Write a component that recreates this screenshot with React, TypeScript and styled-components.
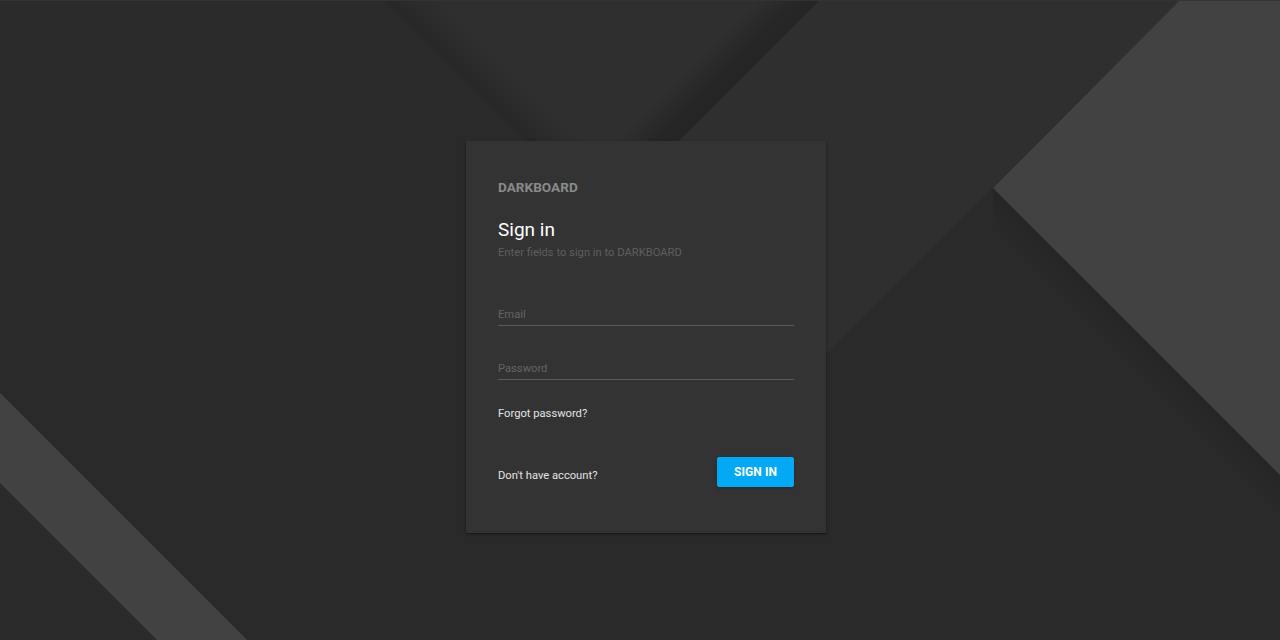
import React from "react";
import styled, { createGlobalStyle } from "styled-components";

const GlobalStyle = createGlobalStyle`
  html, body {
    margin: 0;
    padding: 0;
    background: #2a2a2a;
  }
  body {
    font-family: Roboto, "Noto Sans", "Liberation Sans", sans-serif;
    -webkit-font-smoothing: antialiased;
  }
  * { box-sizing: border-box; }
`;

const Page = styled.div`
  position: relative;
  width: 100%;
  height: 640px;
  overflow: hidden;
  display: flex;
  align-items: flex-start;
  justify-content: center;
  padding: 141px 0 0 12px;
  background: #2a2a2a;
`;

const Backdrop = styled.svg`
  position: absolute;
  left: 0;
  top: 0;
  width: 1280px;
  height: 640px;
  z-index: 0;
`;

const Card = styled.form`
  position: relative;
  z-index: 1;
  width: 360px;
  display: flex;
  flex-direction: column;
  padding: 38px 32px 46px;
  background: #333333;
  box-shadow: 0 1px 3px rgba(0, 0, 0, 0.35), 0 1px 1px rgba(0, 0, 0, 0.2);
`;

const Brand = styled.div`
  font-size: 13.6px;
  line-height: 16px;
  font-weight: 700;
  color: #8a8a8a;
`;

const Title = styled.h1`
  margin: 23px 0 0;
  font-size: 19px;
  line-height: 24px;
  font-weight: 400;
  color: #ffffff;
`;

const Subtitle = styled.p`
  margin: 4px 0 0;
  font-size: 11.2px;
  line-height: 14px;
  color: #5f5f5f;
`;

const Field = styled.label<{ $gap: number }>`
  display: block;
  margin-top: ${(p) => p.$gap}px;
  padding-bottom: 3px;
  border-bottom: 1px solid #5a5a5a;
`;

const Input = styled.input`
  display: block;
  width: 100%;
  height: 14px;
  padding: 0;
  border: none;
  outline: none;
  background: transparent;
  font-family: inherit;
  font-size: 11.2px;
  line-height: 14px;
  color: #e0e0e0;
  &::placeholder {
    color: #646464;
  }
`;

const TextLink = styled.a`
  font-size: 11.2px;
  line-height: 14px;
  color: #e4e4e4;
  text-decoration: none;
  cursor: pointer;
`;

const ForgotRow = styled.div`
  margin-top: 27px;
  display: flex;
`;

const ActionRow = styled.div`
  margin-top: 36px;
  display: flex;
  align-items: center;
  justify-content: space-between;
`;

const SignupLink = styled(TextLink)`
  margin-top: 8px;
`;

const Button = styled.button`
  width: 77px;
  height: 30px;
  padding: 0 0 1px;
  border: none;
  border-radius: 2px;
  background: #03a9f4;
  color: #ffffff;
  font-family: inherit;
  font-size: 12px;
  font-weight: 700;
  letter-spacing: 0.1px;
  box-shadow: 0 1px 3px rgba(0, 0, 0, 0.3);
  cursor: pointer;
`;

function Background() {
  return (
    <Backdrop viewBox="0 0 1280 640" aria-hidden="true">
      <defs>
        <linearGradient id="bandShade" gradientUnits="userSpaceOnUse" x1="757" y1="0" x2="788.5" y2="31.5">
          <stop offset="0" stopColor="#2f2f2f" />
          <stop offset="0.6" stopColor="#272727" />
          <stop offset="1" stopColor="#252525" />
        </linearGradient>
        <linearGradient id="leftShade" gradientUnits="userSpaceOnUse" x1="385" y1="0" x2="415" y2="-30">
          <stop offset="0" stopColor="#000" stopOpacity="0.16" />
          <stop offset="1" stopColor="#000" stopOpacity="0" />
        </linearGradient>
        <linearGradient id="diamondShade" gradientUnits="userSpaceOnUse" x1="1100" y1="295" x2="1080" y2="315">
          <stop offset="0" stopColor="#000" stopOpacity="0.12" />
          <stop offset="1" stopColor="#000" stopOpacity="0" />
        </linearGradient>
        <linearGradient id="stripeShade" gradientUnits="userSpaceOnUse" x1="0" y1="483" x2="-20" y2="503">
          <stop offset="0" stopColor="#000" stopOpacity="0.14" />
          <stop offset="1" stopColor="#000" stopOpacity="0" />
        </linearGradient>
      </defs>
      <rect x="0" y="0" width="1280" height="640" fill="#2a2a2a" />
      <polygon points="385,0 1180,0 782.5,397.5" fill="#2f2f2f" />
      <polygon points="385,0 445,0 745,300 685,300" fill="url(#leftShade)" />
      <polygon points="757,0 820,0 602.5,217.5 571,186" fill="url(#bandShade)" />
      <polygon points="993,188 1280,475 1280,525 993,238" fill="url(#diamondShade)" />
      <polygon points="1180,0 1280,0 1280,475 993,188" fill="#424242" />
      <polygon points="0,483 157,640 207,640 0,433" fill="url(#stripeShade)" />
      <polygon points="0,393 247,640 157,640 0,483" fill="#424242" />
      <rect x="0" y="0" width="1280" height="1" fill="#333333" />
    </Backdrop>
  );
}

export default function App() {
  return (
    <>
      <GlobalStyle />
      <Page>
        <Background />
        <Card onSubmit={(e) => e.preventDefault()}>
          <Brand>DARKBOARD</Brand>
          <Title>Sign in</Title>
          <Subtitle>Enter fields to sign in to DARKBOARD</Subtitle>
          <Field $gap={48}>
            <Input type="email" placeholder="Email" />
          </Field>
          <Field $gap={36}>
            <Input type="password" placeholder="Password" />
          </Field>
          <ForgotRow>
            <TextLink>Forgot password?</TextLink>
          </ForgotRow>
          <ActionRow>
            <SignupLink>Don't have account?</SignupLink>
            <Button type="submit">SIGN IN</Button>
          </ActionRow>
        </Card>
      </Page>
    </>
  );
}
